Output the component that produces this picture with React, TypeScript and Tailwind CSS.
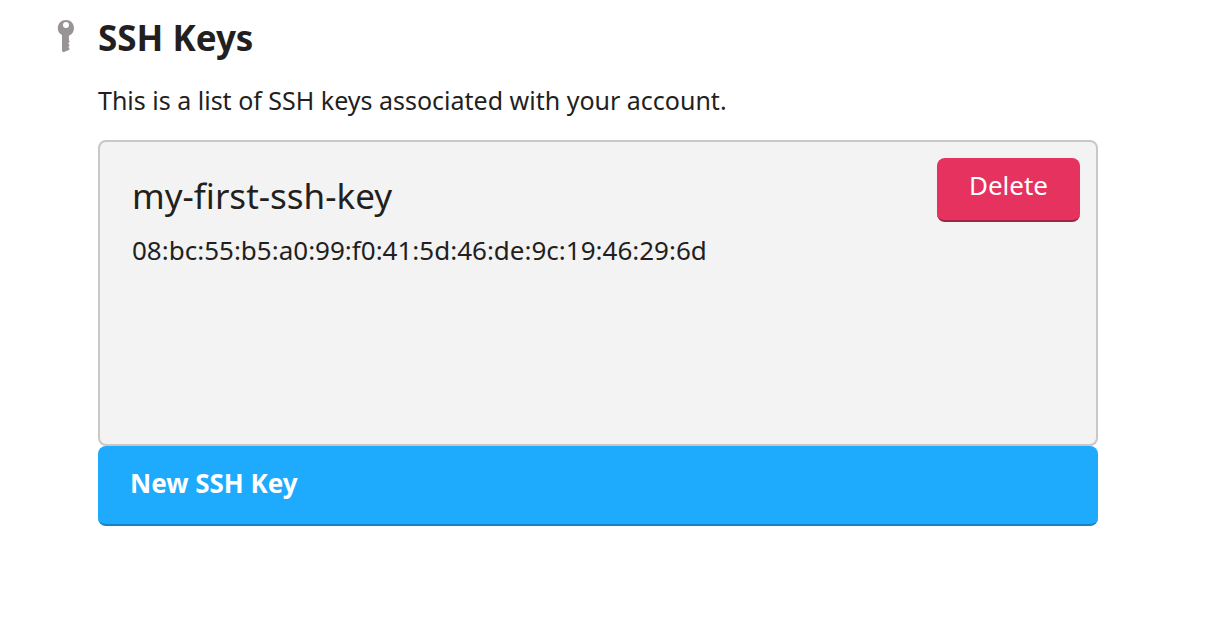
import React from "react";

type SshKey = { name: string; fingerprint: string };

const keys: SshKey[] = [
  { name: "my-first-ssh-key", fingerprint: "08:bc:55:b5:a0:99:f0:41:5d:46:de:9c:19:46:29:6d" },
];

function KeyIcon() {
  return (
    <svg viewBox="0 0 17 33" className="mt-5 h-[33px] w-[17px] shrink-0" fill="#989493" aria-hidden="true">
      <path
        fillRule="evenodd"
        d="M9 0C4.300 0 .8 3.500 .8 8.200c0 3 1.500 5.400 4.200 6.800V31.200L6.700 32.300 12.300 29.700V28L11.300 27 12.700 25.500 11.600 24.200V22.700L12.700 21.500 11.900 20.300V15.700C15.200 14.300 17 11.500 17 8.200 17 3.500 13.600 0 9 0ZM9 2a3 3 0 1 1 0 6 3 3 0 0 1 0-6Z"
      />
    </svg>
  );
}

function KeyCard({ name, fingerprint }: SshKey) {
  return (
    <li className="flex min-h-[306px] items-start justify-between rounded-lg border-2 border-[#cbc7c7] bg-[#f3f3f3] py-4 pr-4 pl-8">
      <div className="pt-3">
        <h2 className="text-[35px] leading-[52px]">{name}</h2>
        <p className="mt-2 text-[26px] leading-10">{fingerprint}</p>
      </div>
      <button
        type="button"
        className="h-16 shrink-0 rounded-lg border-b-2 border-[#a02343] bg-[#e5325f] px-8 pb-2 text-[26px] leading-10 text-white"
      >
        Delete
      </button>
    </li>
  );
}

export default function App() {
  return (
    <main className="flex min-h-screen gap-6 bg-white pr-[110px] pl-[57px] font-['Noto_Sans',sans-serif] text-[#231f20]">
      <KeyIcon />
      <div className="min-w-0 flex-1 pt-3">
        <h1 className="text-[35px] leading-[52px] font-bold">SSH Keys</h1>
        <p className="mt-4 text-[25px] leading-10">This is a list of SSH keys associated with your account.</p>
        <ul className="mt-5">
          {keys.map((key) => (
            <KeyCard key={key.fingerprint} {...key} />
          ))}
        </ul>
        <button
          type="button"
          className="block h-20 w-full rounded-lg border-b-2 border-[#1683c6] bg-[#1eabfe] px-8 pb-1 text-left text-[26px] leading-10 font-bold text-white"
        >
          New SSH Key
        </button>
      </div>
    </main>
  );
}
